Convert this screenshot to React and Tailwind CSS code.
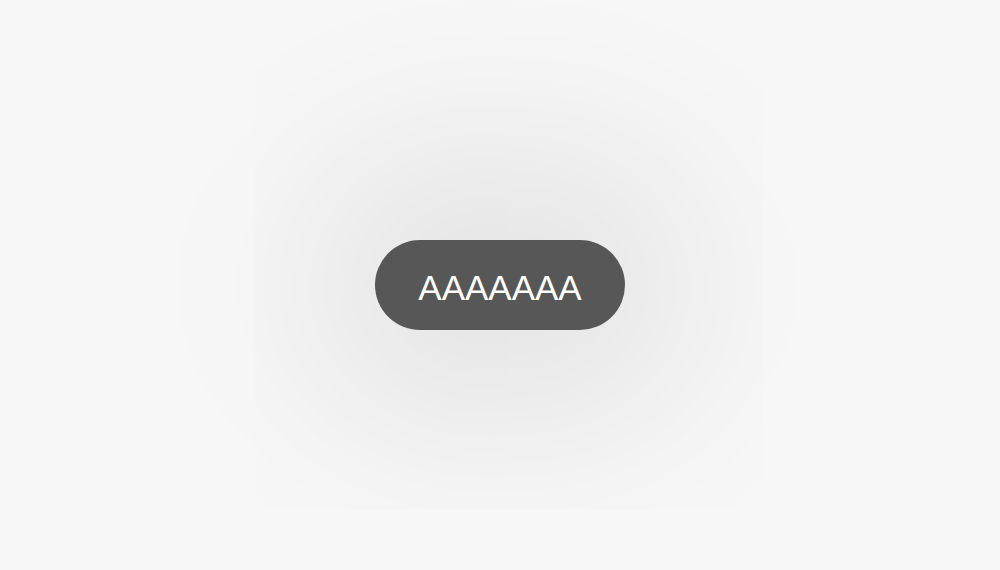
export default function App() {
    return (
        <div className="flex h-[570px] w-full items-center justify-center bg-[#f7f7f7] font-['Liberation_Sans',sans-serif]">
            {/* Pill button with a wide soft glow behind it */}
            <button className="flex h-[90px] w-[250px] items-center justify-center rounded-full bg-[#575757] pt-[4px] text-[35px] font-normal leading-none text-white shadow-[0_0_220px_55px_rgba(0,0,0,0.12)]">
                AAAAAAA
            </button>
        </div>
    );
}
